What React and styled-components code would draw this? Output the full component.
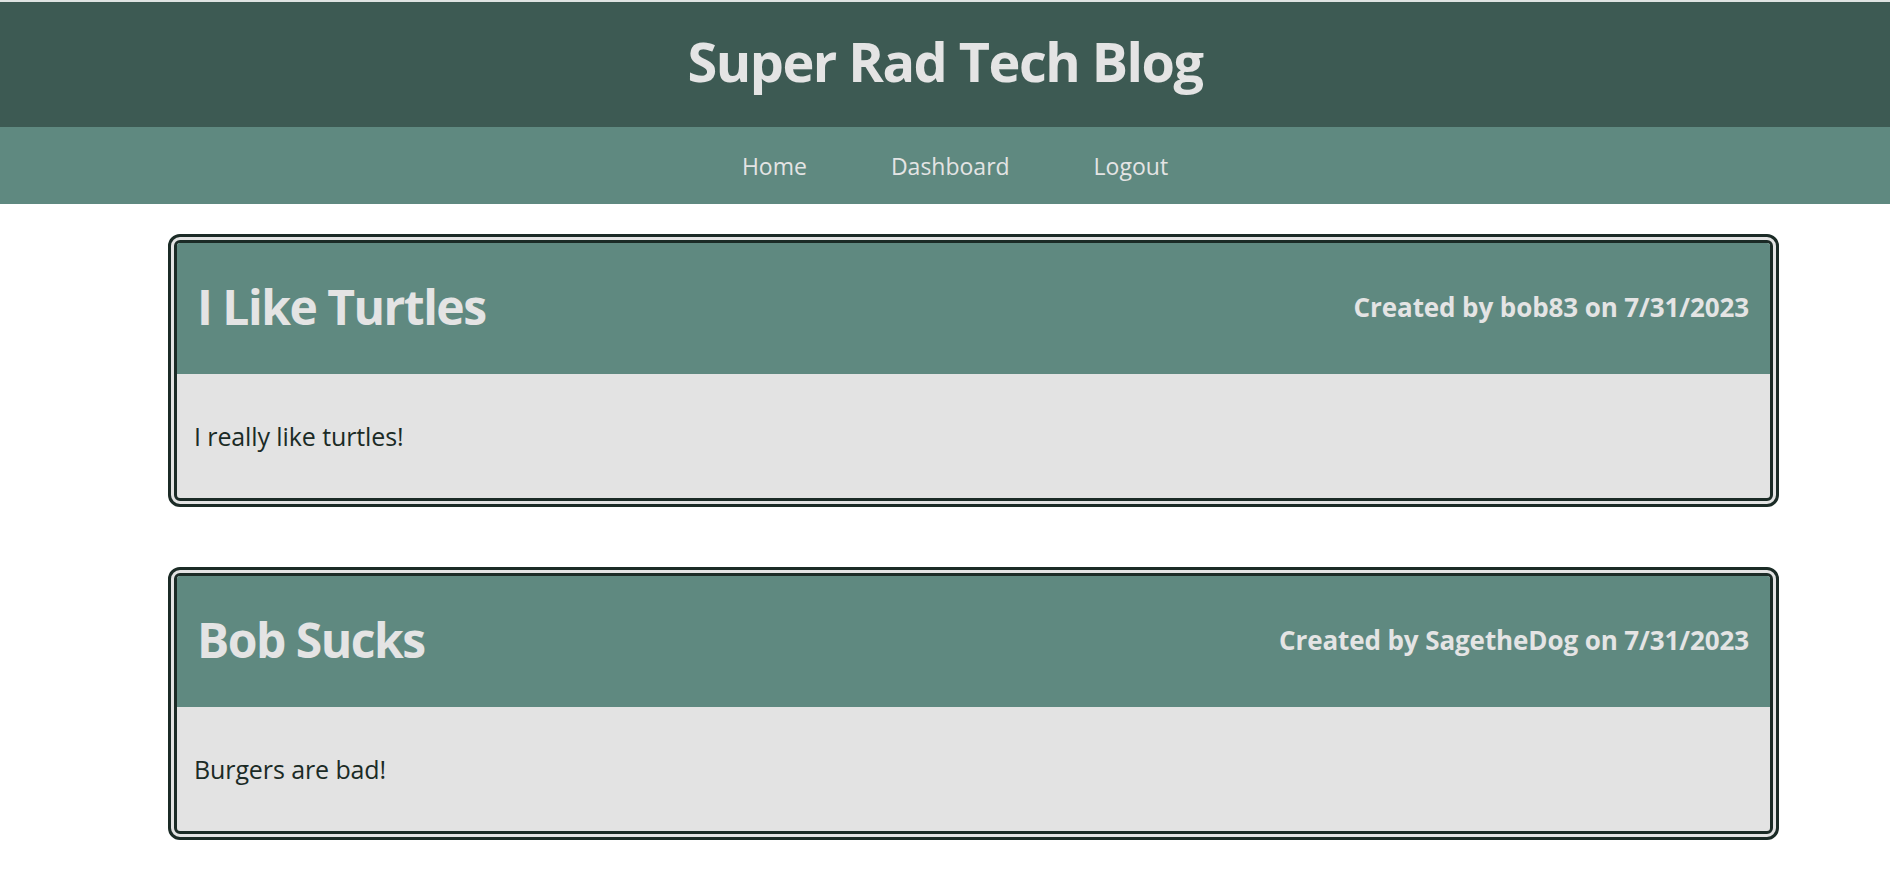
import React from "react";
import styled, { createGlobalStyle } from "styled-components";

const GlobalStyle = createGlobalStyle`
  body {
    margin: 0;
    background: #ffffff;
    font-family: "Open Sans", "Noto Sans", sans-serif;
  }
`;

const Page = styled.div`
  border-top: 2px solid #dfe3e2;
`;

const Header = styled.header`
  height: 125px;
  background-color: #3d5a53;
  display: flex;
  justify-content: center;
  align-items: center;
  padding-bottom: 8px;
  box-sizing: border-box;
`;

const Title = styled.h1`
  margin: 0;
  font-size: 54px;
  line-height: 1;
  letter-spacing: -1.5px;
  font-weight: 700;
  color: #e4e4e4;
`;

const Nav = styled.nav`
  height: 77px;
  background-color: #5f8980;
  display: flex;
  justify-content: center;
  align-items: center;
  gap: 84px;
  padding-left: 20px;
`;

const NavLink = styled.a`
  font-size: 23px;
  color: #e4e4e4;
  text-decoration: none;
`;

const Main = styled.main`
  margin: 30px 111px 40px 168px;
  display: flex;
  flex-direction: column;
  gap: 60px;
`;

const Card = styled.article`
  border: 9px double #1b2b26;
  border-radius: 12px;
  background-color: #e3e3e3;
  overflow: hidden;
`;

const CardHead = styled.div`
  height: 131px;
  background-color: #5f8980;
  display: flex;
  justify-content: space-between;
  align-items: center;
  padding: 0 21px 4px 20px;
  box-sizing: border-box;
`;

const PostTitle = styled.h2`
  margin: 0;
  font-size: 48px;
  line-height: 1;
  letter-spacing: -1.5px;
  font-weight: 700;
  color: #e4e4e4;
`;

const Meta = styled.h3`
  margin: 0;
  font-size: 26px;
  line-height: 1;
  letter-spacing: -0.1px;
  font-weight: 700;
  color: #e4e4e4;
`;

const CardBody = styled.div`
  height: 124px;
  display: flex;
  align-items: center;
  padding: 0 17px;
  font-size: 25px;
  letter-spacing: -0.1px;
  color: #1b2b26;
`;

const posts = [
  { title: "I Like Turtles", user: "bob83", date: "7/31/2023", body: "I really like turtles!" },
  { title: "Bob Sucks", user: "SagetheDog", date: "7/31/2023", body: "Burgers are bad!" },
];

const App = () => {
  return (
    <Page>
      <GlobalStyle />
      <Header>
        <Title>Super Rad Tech Blog</Title>
      </Header>
      <Nav>
        <NavLink href="#">Home</NavLink>
        <NavLink href="#">Dashboard</NavLink>
        <NavLink href="#">Logout</NavLink>
      </Nav>
      <Main>
        {posts.map((post) => (
          <Card key={post.title}>
            <CardHead>
              <PostTitle>{post.title}</PostTitle>
              <Meta>
                Created by {post.user} on {post.date}
              </Meta>
            </CardHead>
            <CardBody>{post.body}</CardBody>
          </Card>
        ))}
      </Main>
    </Page>
  );
};

export default App;
